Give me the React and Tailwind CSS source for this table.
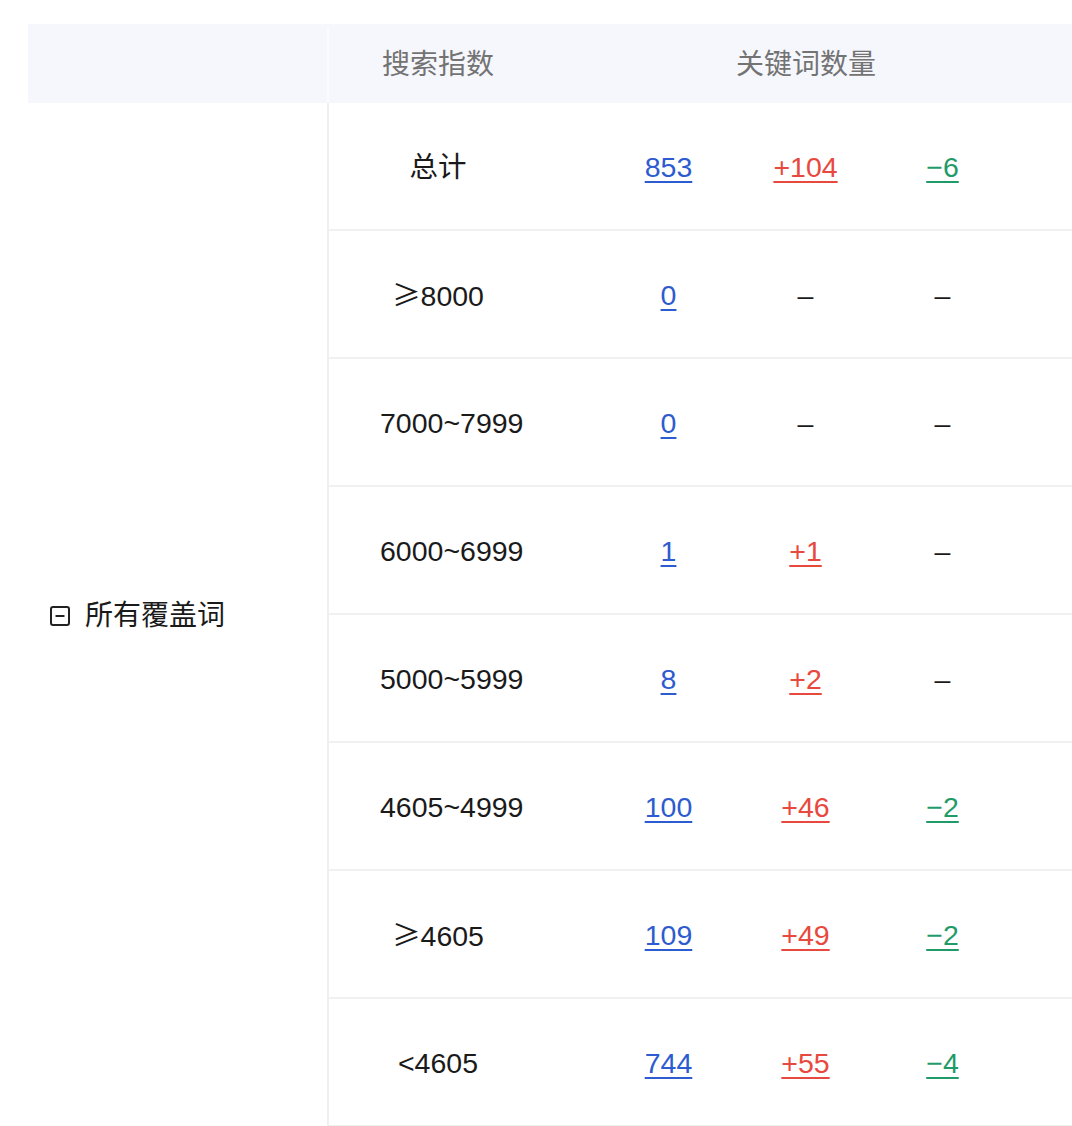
import React from "react";

const rows = [
  { range: "总计", total: "853", up: "+104", down: "−6" },
  { range: "≥8000", total: "0", up: null, down: null },
  { range: "7000~7999", total: "0", up: null, down: null },
  { range: "6000~6999", total: "1", up: "+1", down: null },
  { range: "5000~5999", total: "8", up: "+2", down: null },
  { range: "4605~4999", total: "100", up: "+46", down: "−2" },
  { range: "≥4605", total: "109", up: "+49", down: "−2" },
  { range: "<4605", total: "744", up: "+55", down: "−4" },
];

const font = {
  fontFamily: '"Liberation Sans", "Noto Sans CJK SC", sans-serif',
};

const Dash = () => <span className="text-[#1a1a1a]">–</span>;

const MinusSquare = () => (
  <svg width="20" height="20" viewBox="0 0 20 20" className="shrink-0">
    <rect x="1" y="1" width="18" height="18" rx="2" fill="none" stroke="#222" strokeWidth="2" />
    <line x1="5.5" y1="10" x2="14.5" y2="10" stroke="#222" strokeWidth="2" />
  </svg>
);

const RangeText = ({ text }) => {
  if (text.startsWith("≥")) {
    return (
      <>
        <span style={{ fontFamily: '"Noto Sans CJK SC", sans-serif' }}>≥</span>
        {text.slice(1)}
      </>
    );
  }
  return text;
};

export default function App() {
  return (
    <div className="w-[1072px] h-[1126px] overflow-hidden bg-white pt-[24px] pl-[28px]" style={font}>
      <div className="w-[1100px]">
        {/* Header */}
        <div className="flex h-[79px] bg-[#f6f7fd] text-[28px] text-[#737373] pt-[3px]">
          <div className="w-[299px] shrink-0" />
          <div className="w-[2px] shrink-0 bg-[#fafbff]" />
          <div className="w-[218px] shrink-0 flex items-center justify-center">搜索指数</div>
          <div className="w-[518px] shrink-0 flex items-center justify-center">关键词数量</div>
          <div className="flex-1" />
        </div>

        {/* Body */}
        <div className="flex">
          <div className="w-[301px] shrink-0 border-r-2 border-[#f0f0f0] flex items-center pl-[22px] pt-[2px] gap-[15px] text-[28px] text-[#1a1a1a]">
            <MinusSquare />
            <span>所有覆盖词</span>
          </div>
          <div className="flex-1 flex flex-col">
            {rows.map((r) => (
              <div
                key={r.range}
                className="h-[128px] border-b-2 border-[#f0f0f0] flex items-center pt-[3px] text-[28.5px]"
              >
                <div className="w-[218px] shrink-0 flex justify-center">
                  <div className="w-[116px] text-center whitespace-nowrap text-[#1a1a1a]">
                    <RangeText text={r.range} />
                  </div>
                </div>
                <div className="pl-[53px] grid grid-cols-3 w-[464px] shrink-0">
                  <div className="w-[137px] text-center">
                    <span className="text-[#2d5bd0] underline decoration-2 underline-offset-[4px] cursor-pointer">
                      {r.total}
                    </span>
                  </div>
                  <div className="w-[137px] text-center">
                    {r.up ? (
                      <span className="text-[#e8493e] underline decoration-2 underline-offset-[4px] cursor-pointer">
                        {r.up}
                      </span>
                    ) : (
                      <Dash />
                    )}
                  </div>
                  <div className="w-[137px] text-center">
                    {r.down ? (
                      <span className="text-[#1f9b69] underline decoration-2 underline-offset-[4px] cursor-pointer">
                        {r.down}
                      </span>
                    ) : (
                      <Dash />
                    )}
                  </div>
                </div>
                <div className="flex-1" />
              </div>
            ))}
          </div>
        </div>
      </div>
    </div>
  );
}
